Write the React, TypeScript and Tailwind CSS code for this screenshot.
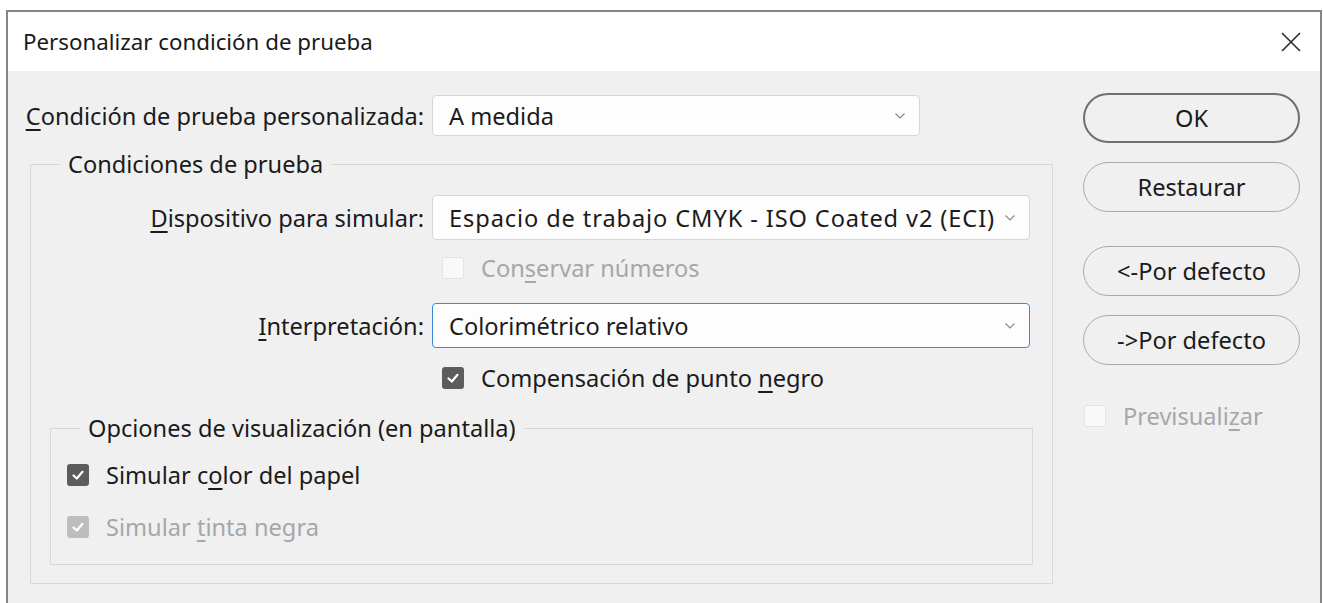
import React from "react";

const FONT = { fontFamily: '"Noto Sans", "Open Sans", sans-serif' };

function Chevron() {
  return (
    <svg width="12" height="8" viewBox="0 0 12 8" className="shrink-0">
      <polyline points="1.5,1.5 6,6 10.5,1.5" fill="none" stroke="#8a8a8a" strokeWidth="1.2" />
    </svg>
  );
}

function Select({
  value,
  width,
  height,
  focused,
  wide,
}: {
  value: string;
  width: string;
  height: string;
  focused?: boolean;
  wide?: boolean;
}) {
  return (
    <div
      className={`flex items-center justify-between rounded-[4px] bg-[#fdfdfd] pl-[16px] pr-[13px] text-[#1b1b1b] ${width} ${height} ${
        focused ? "border-[1.5px] border-[#3b8ae0]" : "border border-[#d6d6d6]"
      }`}
    >
      <span className={wide ? "tracking-[0.9px]" : ""}>{value}</span>
      <Chevron />
    </div>
  );
}

function Check({ checked, disabled }: { checked?: boolean; disabled?: boolean }) {
  if (!checked) {
    return <div className="h-[22px] w-[22px] shrink-0 rounded-[3px] border border-[#e4e4e4] bg-[#f9f9f9]" />;
  }
  return (
    <div
      className={`flex h-[22px] w-[22px] shrink-0 items-center justify-center rounded-[3px] ${
        disabled ? "bg-[#bdbdbd]" : "bg-[#5c5c5c]"
      }`}
    >
      <svg width="14" height="14" viewBox="0 0 14 14">
        <polyline points="2.5,7.5 5.8,10.5 11.5,3.8" fill="none" stroke="#fff" strokeWidth="2.2" strokeLinecap="round" strokeLinejoin="round" />
      </svg>
    </div>
  );
}

function Option({ children, checked, disabled }: { children: React.ReactNode; checked?: boolean; disabled?: boolean }) {
  return (
    <div className="flex h-[30px] items-center gap-[17px]">
      <Check checked={checked} disabled={disabled} />
      <span className={disabled ? "text-[#a6a6ab]" : "text-[#1b1b1b]"}>{children}</span>
    </div>
  );
}

function PillButton({ children, primary }: { children: React.ReactNode; primary?: boolean }) {
  return (
    <button
      className={`flex h-[50px] w-[217px] items-center justify-center rounded-full bg-[#f0f0f0] text-[#1b1b1b] ${
        primary ? "border-2 border-[#6f6f6f]" : "border border-[#ababab]"
      }`}
    >
      {children}
    </button>
  );
}

export default function App() {
  return (
    <div
      className="h-[603px] w-[1323px] overflow-hidden bg-white pl-[6px] pt-[10px] text-[23.6px] leading-[30px]"
      style={FONT}
    >
      <div className="h-[640px] w-[1316px] border-x-2 border-t-2 border-[#858585] bg-[#f0f0f0]">
        {/* title bar */}
        <div className="flex h-[59px] items-center justify-between bg-white pl-[15px] pr-[18px] text-[22.3px] text-[#1a1a1a]">
          <span>Personalizar condición de prueba</span>
          <svg width="22" height="22" viewBox="0 0 22 22">
            <path d="M2 2 L20 20 M20 2 L2 20" stroke="#2b2b2b" strokeWidth="1.6" />
          </svg>
        </div>

        <div className="flex">
          {/* left column */}
          <div className="flex w-[1045px] flex-col pt-[24px]">
            <div className="flex items-center gap-[8px]">
              <span className="w-[416px] text-right text-[#1b1b1b]">
                <span className="underline underline-offset-4">C</span>ondición de prueba personalizada:
              </span>
              <Select value="A medida" width="w-[488px]" height="h-[41px]" />
            </div>

            <fieldset className="ml-[22px] mt-[13px] w-[1023px] border border-[#d8d8d8] pb-[18px]">
              <legend className="ml-[29px] px-[8px] text-[#1b1b1b]">Condiciones de prueba</legend>

              <div className="mt-[16px] flex items-center gap-[8px]">
                <span className="w-[393px] text-right text-[#1b1b1b]">
                  <span className="underline underline-offset-4">D</span>ispositivo para simular:
                </span>
                <Select
                  value="Espacio de trabajo CMYK - ISO Coated v2 (ECI)"
                  width="w-[598px]"
                  height="h-[45px]"
                  wide
                />
              </div>

              <div className="ml-[411px] mt-[13px]">
                <Option disabled>
                  Con<span className="underline underline-offset-4">s</span>ervar números
                </Option>
              </div>

              <div className="mt-[20px] flex items-center gap-[8px]">
                <span className="w-[393px] text-right text-[#1b1b1b]">
                  <span className="underline underline-offset-4">I</span>nterpretación:
                </span>
                <Select value="Colorimétrico relativo" width="w-[598px]" height="h-[45px]" focused />
              </div>

              <div className="ml-[411px] mt-[15px]">
                <Option checked>
                  Compensación de punto <span className="underline underline-offset-4">n</span>egro
                </Option>
              </div>

              <fieldset className="ml-[19px] mt-[20px] w-[983px] border border-[#d8d8d8] pb-[22px] pl-[16px]">
                <legend className="ml-[13px] px-[8px] text-[#1b1b1b]">
                  Opciones de visualización (en pantalla)
                </legend>
                <div className="mt-[17px]">
                  <Option checked>
                    Simular c<span className="underline underline-offset-4">o</span>lor del papel
                  </Option>
                </div>
                <div className="mt-[22px]">
                  <Option checked disabled>
                    Simular <span className="underline underline-offset-4">t</span>inta negra
                  </Option>
                </div>
              </fieldset>
            </fieldset>
          </div>

          {/* right column */}
          <div className="ml-[30px] flex flex-col pt-[22px]">
            <PillButton primary>OK</PillButton>
            <div className="mt-[19px]">
              <PillButton>Restaurar</PillButton>
            </div>
            <div className="mt-[34px]">
              <PillButton>&lt;-Por defecto</PillButton>
            </div>
            <div className="mt-[19px]">
              <PillButton>-&gt;Por defecto</PillButton>
            </div>
            <div className="ml-[1px] mt-[36px]">
              <Option disabled>
                Previsuali<span className="underline underline-offset-4">z</span>ar
              </Option>
            </div>
          </div>
        </div>
      </div>
    </div>
  );
}
